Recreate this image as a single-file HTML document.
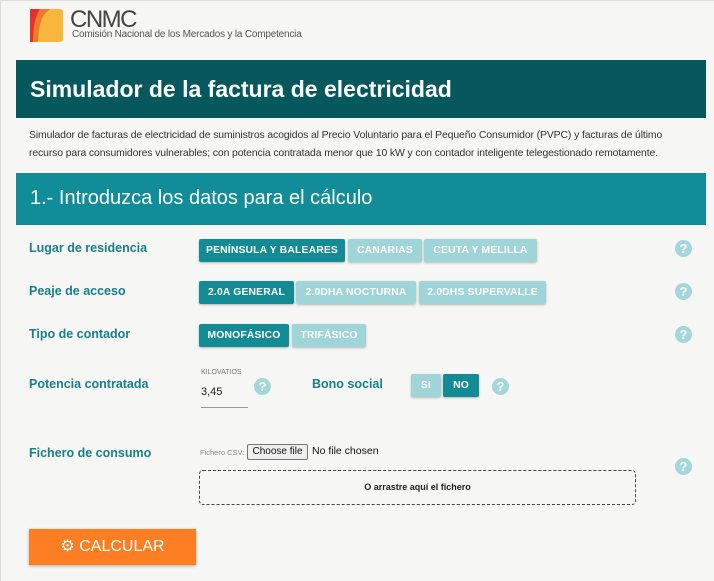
<!DOCTYPE html>
<html><head><meta charset="utf-8"><style>
*{box-sizing:border-box;margin:0;padding:0}
body{width:714px;height:581px;background:#f6f6f4;font-family:"Liberation Sans",sans-serif;position:relative;overflow:hidden;box-shadow:inset 1px 1px 0 #ddd}
.abs{position:absolute}
.h1{left:16px;top:60px;width:690px;height:58px;background:#06585d;color:#fff;font-weight:bold;font-size:23px;padding:16px 0 0 14px;letter-spacing:0}
.desc{left:29px;top:127px;font-size:10.4px;color:#333;line-height:18px;white-space:nowrap;letter-spacing:-0.1px}
.h2{left:16px;top:173px;width:690px;height:52px;background:#118d99;color:#fff;font-size:20px;padding:14px 0 0 14px;letter-spacing:0}
.lbl{left:29px;color:#17808c;font-weight:bold;font-size:12.5px}
.btn{position:absolute;height:23px;font-size:10.3px;font-weight:bold;color:#fff;text-align:center;line-height:23px;border-radius:2px;box-shadow:0 1px 2px rgba(0,0,0,.25);letter-spacing:.2px}
.on{background:#138b95}.off{background:#9fd5d9}
.q{position:absolute;width:17px;height:17px;border-radius:50%;background:#a3d7db;color:#fff;font-weight:bold;font-size:13px;text-align:center;line-height:17px}
</style></head><body>
<svg class="abs" style="left:30px;top:9px" width="33" height="33" viewBox="0 0 33 33"><rect width="33" height="33" rx="3" fill="#f8b73c"/><path d="M0 0H20C12 6 9 14 8 33H0Z" fill="#ee7a2a"/><path d="M0 0H10C5 8 3 18 3 33H0Z" fill="#e2312c"/></svg>
<div class="abs" style="left:70px;top:6px;font-size:24px;color:#444;letter-spacing:-1.5px">CNMC</div>
<div class="abs" style="left:72px;top:29px;font-size:10px;color:#555;letter-spacing:-0.2px">Comisión Nacional de los Mercados y la Competencia</div>
<div class="abs h1">Simulador de la factura de electricidad</div>
<div class="abs desc">Simulador de facturas de electricidad de suministros acogidos al Precio Voluntario para el Pequeño Consumidor (PVPC) y facturas de último<br>recurso para consumidores vulnerables; con potencia contratada menor que 10 kW y con contador inteligente telegestionado remotamente.</div>
<div class="abs h2">1.- Introduzca los datos para el cálculo</div>

<div class="abs lbl" style="top:241px">Lugar de residencia</div>
<div class="btn on" style="left:199px;top:239px;width:146px">PENÍNSULA Y BALEARES</div>
<div class="btn off" style="left:348px;top:239px;width:74px">CANARIAS</div>
<div class="btn off" style="left:424px;top:239px;width:113px">CEUTA Y MELILLA</div>
<div class="q" style="left:675px;top:240px">?</div>

<div class="abs lbl" style="top:284px">Peaje de acceso</div>
<div class="btn on" style="left:199px;top:281px;width:95px">2.0A GENERAL</div>
<div class="btn off" style="left:296px;top:281px;width:120px">2.0DHA NOCTURNA</div>
<div class="btn off" style="left:419px;top:281px;width:127px">2.0DHS SUPERVALLE</div>
<div class="q" style="left:675px;top:283px">?</div>

<div class="abs lbl" style="top:327px">Tipo de contador</div>
<div class="btn on" style="left:199px;top:324px;width:90px">MONOFÁSICO</div>
<div class="btn off" style="left:292px;top:324px;width:74px">TRIFÁSICO</div>
<div class="q" style="left:675px;top:326px">?</div>

<div class="abs lbl" style="top:377px">Potencia contratada</div>
<div class="abs" style="left:201px;top:369px;font-size:7px;color:#777">KILOVATIOS</div>
<div class="abs" style="left:201px;top:386px;font-size:11px;color:#222">3,45</div>
<div class="abs" style="left:201px;top:407px;width:47px;border-top:1px solid #999"></div>
<div class="q" style="left:254px;top:378px">?</div>
<div class="abs lbl" style="left:312px;top:377px">Bono social</div>
<div class="btn off" style="left:411px;top:374px;width:30px">SI</div>
<div class="btn on" style="left:443px;top:374px;width:36px">NO</div>
<div class="q" style="left:492px;top:378px">?</div>

<div class="abs lbl" style="top:446px">Fichero de consumo</div>
<div class="abs" style="left:200px;top:448px;font-size:7.5px;color:#888">Fichero CSV:</div>
<div class="abs" style="left:247px;top:444px;width:61px;height:16px;border:1px solid #777;border-radius:2px;background:#efefef;font-size:10px;line-height:14px;text-align:center;color:#111">Choose file</div>
<div class="abs" style="left:312px;top:445px;font-size:10.5px;color:#111">No file chosen</div>
<div class="abs" style="left:199px;top:470px;width:437px;height:35px;border:1px dashed #444;border-radius:4px;font-size:9px;font-weight:bold;text-align:center;line-height:33px;color:#222">O arrastre aquí el fichero</div>
<div class="q" style="left:675px;top:458px">?</div>

<div class="abs" style="left:29px;top:529px;width:167px;height:36px;background:#fe7f23;box-shadow:0 1px 3px rgba(0,0,0,.3);color:#fff;font-size:16px;text-align:center;line-height:36px">⚙ CALCULAR</div>
</body></html>
